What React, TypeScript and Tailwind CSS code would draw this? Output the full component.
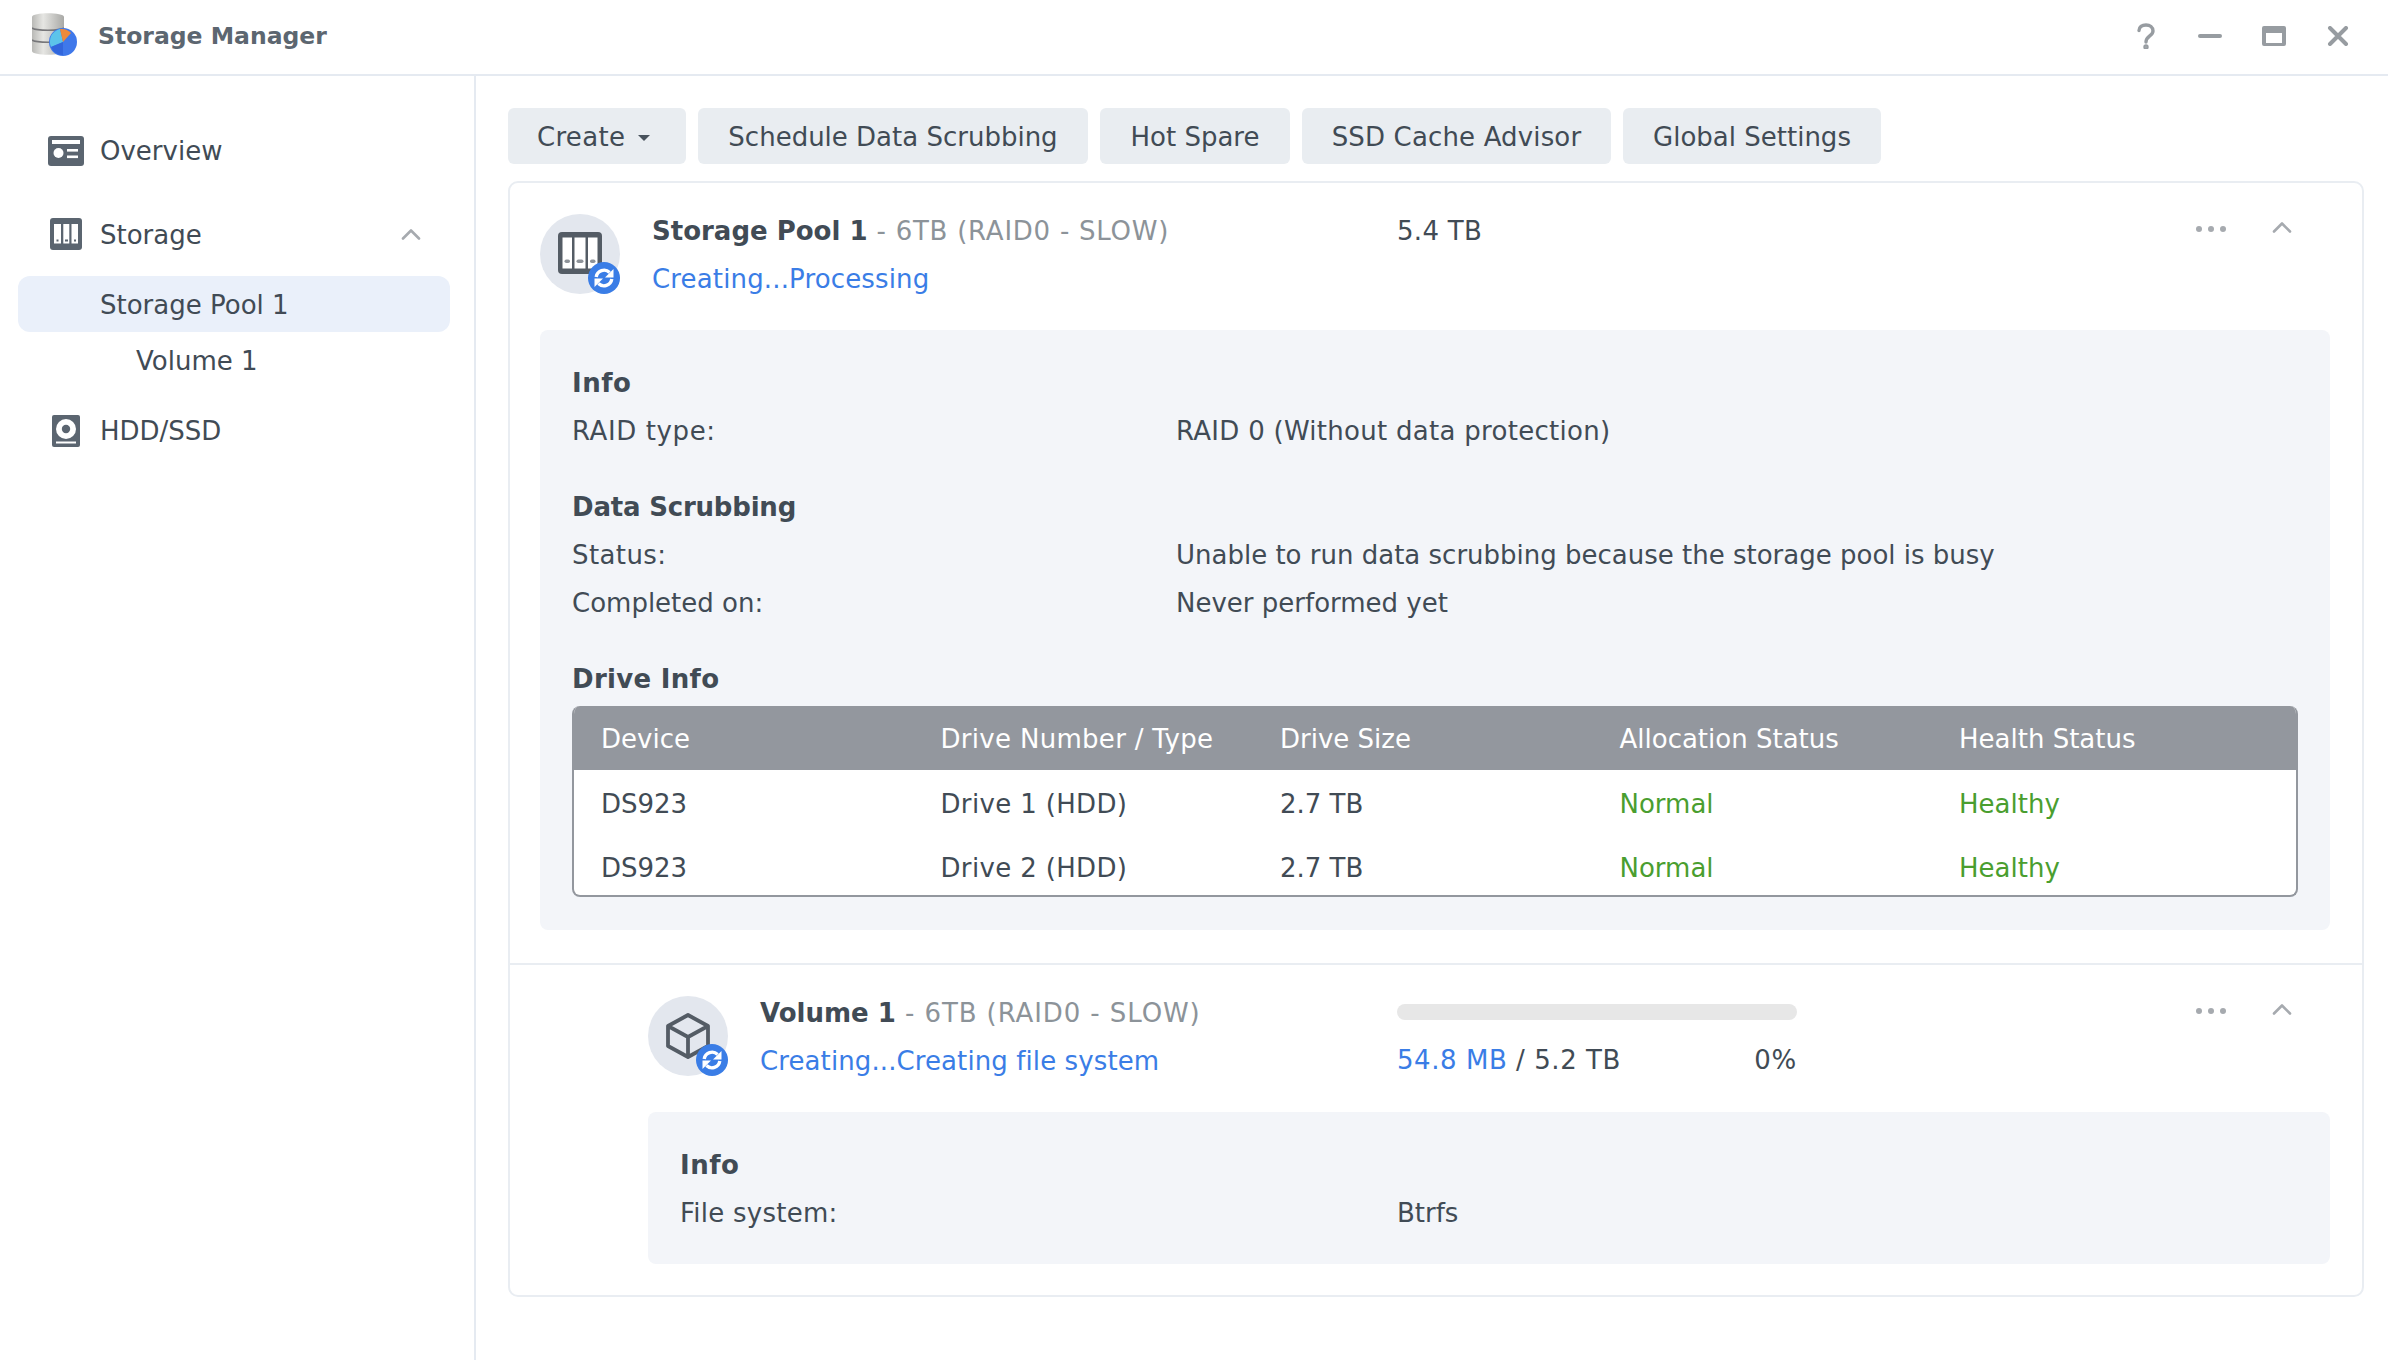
import React from 'react'

const chevron = (
  <svg width="20" height="12" viewBox="0 0 20 12" fill="none" stroke="#a6aaaf" strokeWidth="2.6" strokeLinecap="round" strokeLinejoin="round">
    <path d="M2 10.5 10 2.5l8 8" />
  </svg>
)

function Dots() {
  return (
    <div className="flex w-[30px] justify-between">
      <span className="h-[6px] w-[6px] rounded-full bg-[#a6aaaf]" />
      <span className="h-[6px] w-[6px] rounded-full bg-[#a6aaaf]" />
      <span className="h-[6px] w-[6px] rounded-full bg-[#a6aaaf]" />
    </div>
  )
}

function Logo() {
  return (
    <svg width="46" height="46" viewBox="0 0 46 46">
      <defs>
        <linearGradient id="can" x1="0" x2="1" y1="0" y2="0">
          <stop offset="0" stopColor="#b9b9b6" />
          <stop offset="0.35" stopColor="#e6e6e3" />
          <stop offset="1" stopColor="#a9a9a6" />
        </linearGradient>
      </defs>
      <path d="M0 4c0-5 32-5 32 0v34c0 5-32 5-32 0z" fill="url(#can)" />
      <path d="M0 15c4 3 28 3 32 0M0 27c4 3 28 3 32 0" stroke="#77777a" strokeWidth="1.6" fill="none" />
      <circle cx="31" cy="29" r="14" fill="#3f78ea" />
      <path d="M31 29 19 34a13 13 0 0 1 9-18z" fill="#5cc4ea" />
      <path d="M31 29 28 16a13 13 0 0 1 11 4z" fill="#ee8a3c" />
      <path d="M31 29 19 34a13 13 0 0 0 12 8z" fill="#3266dc" />
    </svg>
  )
}

function WindowControls() {
  return (
    <div className="flex items-center pr-[18px]">
      <div className="flex h-[64px] w-[64px] items-center justify-center">
        <svg width="18" height="26" viewBox="0 0 18 26" fill="none" stroke="#979ca1" strokeWidth="3.4" strokeLinecap="round">
          <path d="M2 7.5C2 4 5 2 9 2s7 2 7 6c0 5-7 5-7 11" />
          <circle cx="9" cy="24" r="1" fill="#979ca1" />
        </svg>
      </div>
      <div className="flex h-[64px] w-[64px] items-center justify-center">
        <div className="h-[4px] w-[24px] rounded-full bg-[#979ca1]" />
      </div>
      <div className="flex h-[64px] w-[64px] items-center justify-center">
        <svg width="24" height="20" viewBox="0 0 24 20">
          <path d="M2 0h20a2 2 0 0 1 2 2v16a2 2 0 0 1-2 2H2a2 2 0 0 1-2-2V2a2 2 0 0 1 2-2zm2 7v10h16V7z" fill="#979ca1" fillRule="evenodd" />
        </svg>
      </div>
      <div className="flex h-[64px] w-[64px] items-center justify-center">
        <svg width="22" height="20" viewBox="0 0 22 20" fill="none" stroke="#979ca1" strokeWidth="4" strokeLinecap="round">
          <path d="M3 2l16 16M19 2 3 18" />
        </svg>
      </div>
    </div>
  )
}

function SyncBadge() {
  return (
    <svg className="absolute bottom-0 right-0" width="32" height="32" viewBox="0 0 32 32">
      <circle cx="16" cy="16" r="16" fill="#3a7de6" />
      <path d="M8.2 15a8 8 0 0 1 13.4-4.6" fill="none" stroke="#fff" strokeWidth="3.4" />
      <path d="M25.5 7v8.5H17z" fill="#fff" />
      <path d="M23.8 17a8 8 0 0 1-13.4 4.6" fill="none" stroke="#fff" strokeWidth="3.4" />
      <path d="M6.5 25v-8.500H15z" fill="#fff" />
    </svg>
  )
}

function PoolIcon() {
  return (
    <svg width="44" height="42" viewBox="0 0 44 42">
      <rect width="44" height="42" rx="4" fill="#545c65" />
      <rect x="4.5" y="5.5" width="9.500" height="31" fill="#fff" />
      <rect x="16.5" y="5.5" width="11" height="31" fill="#fff" />
      <rect x="30" y="5.5" width="9.500" height="31" fill="#fff" />
      <rect x="6.500" y="27.5" width="5.500" height="3.600" rx="1.800" fill="#8e9399" />
      <rect x="18.500" y="27.5" width="7" height="3.600" rx="1.800" fill="#8e9399" />
      <rect x="32" y="27.5" width="5.500" height="3.600" rx="1.800" fill="#8e9399" />
    </svg>
  )
}

function StorageIcon() {
  return (
    <svg width="32" height="32" viewBox="0 0 32 32">
      <rect width="32" height="32" rx="3" fill="#5b6570" />
      <rect x="4" y="6" width="7" height="19.500" fill="#fff" />
      <rect x="13.300" y="6" width="6" height="19.500" fill="#fff" />
      <rect x="21.500" y="6" width="6.500" height="19.500" fill="#fff" />
      <rect x="6.500" y="21.500" width="2" height="2" fill="#5b6570" />
      <rect x="15" y="21.500" width="3" height="2" fill="#5b6570" />
      <rect x="24" y="21.500" width="2" height="2" fill="#5b6570" />
    </svg>
  )
}

function OverviewIcon() {
  return (
    <svg width="36" height="30" viewBox="0 0 36 30">
      <rect width="36" height="30" rx="3" fill="#5b6570" />
      <rect x="4" y="4" width="28" height="4" fill="#fff" />
      <circle cx="10.500" cy="17" r="5" fill="#fff" />
      <rect x="19" y="13" width="11" height="2.600" fill="#fff" />
      <rect x="19" y="19.500" width="11" height="2.600" fill="#fff" />
    </svg>
  )
}

function DiskIcon() {
  return (
    <svg width="28" height="32" viewBox="0 0 28 32">
      <rect width="28" height="32" rx="2" fill="#5b6570" />
      <circle cx="14" cy="14" r="10" fill="#fff" />
      <circle cx="14" cy="14" r="4.200" fill="#5b6570" />
      <rect x="4" y="26.500" width="20" height="2" fill="#fff" />
    </svg>
  )
}

function CubeIcon() {
  return (
    <svg width="44" height="46" viewBox="0 0 44 46" fill="none" stroke="#545c65" strokeWidth="3.8" strokeLinejoin="round">
      <path d="M22 2 42 13v20L22 44 2 33V13zM2 13l20 11 20-11M22 24v20" />
    </svg>
  )
}

function Avatar({ children }: { children: React.ReactNode }) {
  return (
    <div className="relative flex h-[80px] w-[80px] shrink-0 items-center justify-center rounded-full bg-[#e3e7ee]">
      {children}
      <SyncBadge />
    </div>
  )
}

function SideItem({ icon, label, labelClass, extra }: { icon: React.ReactNode; label: string; labelClass?: string; extra?: React.ReactNode }) {
  return (
    <div className="flex h-[56px] items-center pl-[48px]">
      <div className="flex w-[36px] justify-center">{icon}</div>
      <span className={`ml-[16px] ${labelClass ?? ''}`}>{label}</span>
      {extra}
    </div>
  )
}

function Row({ label, value, labelClass, valueClass }: { label: string; value: string; labelClass?: string; valueClass?: string }) {
  return (
    <div className="flex leading-[32px]">
      <span className={`w-[604px] shrink-0 ${labelClass ?? ''}`}>{label}</span>
      <span className={valueClass}>{value}</span>
    </div>
  )
}

const drives = [
  { device: 'DS923', type: 'Drive 1 (HDD)' },
  { device: 'DS923', type: 'Drive 2 (HDD)' },
]

const tabs = [
  { label: 'Schedule Data Scrubbing', width: 'w-[390px]' },
  { label: 'Hot Spare', width: 'w-[190px]' },
  { label: 'SSD Cache Advisor', width: 'w-[309px] tracking-[0.15px]' },
  { label: 'Global Settings', width: 'w-[258px]' },
]

export default function App() {
  return (
    <div className="flex h-[1360px] w-[2388px] flex-col overflow-hidden bg-white text-[26px] text-[#414b55] [font-family:'DejaVu_Sans',sans-serif]">
      <div className="flex h-[76px] shrink-0 items-center justify-between border-b-2 border-[#e5eaf1] pb-[2px]">
        <div className="flex items-center pl-[32px]">
          <div className="w-[66px]">
            <Logo />
          </div>
          <span className="pt-[1px] text-[23.5px] font-bold text-[#5c6670]">Storage Manager</span>
        </div>
        <WindowControls />
      </div>

      <div className="flex flex-1">
        {/* Sidebar */}
        <div className="w-[476px] shrink-0 border-r-2 border-[#e5eaf1] pt-[47px]">
          <SideItem icon={<OverviewIcon />} label="Overview" />
          <div className="mt-[27px]">
            <SideItem
              icon={<StorageIcon />}
              label="Storage"
              labelClass="pt-[2px]"
              extra={<div className="ml-auto mr-[53px]">{chevron}</div>}
            />
          </div>
          <div className="ml-[18px] mr-[24px]">
            <div className="mt-[14px] flex h-[56px] items-center rounded-[12px] bg-[#eaf0fa] pl-[82px] pt-[3px]">Storage Pool 1</div>
            <div className="flex h-[56px] items-center pl-[118px] pt-[3px]">Volume 1</div>
          </div>
          <div className="mt-[15px]">
            <SideItem icon={<DiskIcon />} label="HDD/SSD" />
          </div>
        </div>

        {/* Main */}
        <div className="flex-1 pl-[32px] pt-[32px]">
          <div className="flex gap-[12px]">
            <button className="flex h-[56px] w-[178px] items-center rounded-[6px] bg-[#e9edf1] pl-[29px] pt-[2px] tracking-[0.3px]">
              Create
              <span className="ml-[13px] mt-[2px] h-0 w-0 border-x-[6px] border-t-[6px] border-x-transparent border-t-[#48525c]" />
            </button>
            {tabs.map(t => (
              <button key={t.label} className={`h-[56px] rounded-[6px] bg-[#e9edf1] pt-[2px] ${t.width}`}>
                {t.label}
              </button>
            ))}
          </div>

          <div className="mt-[17px] w-[1856px] rounded-[10px] border-2 border-[#e9edf2]">
            {/* Storage pool */}
            <div className="pb-[33px] pl-[30px] pr-[32px] pt-[31px]">
              <div className="flex h-[80px]">
                <Avatar>
                  <div className="mb-[2px]">
                    <PoolIcon />
                  </div>
                </Avatar>
                <div className="ml-[32px] flex w-[745px] shrink-0 flex-col gap-[16px] pt-[1px] leading-[32px]">
                  <div>
                    <span className="font-bold">Storage Pool 1</span>
                    <span className="tracking-[0.75px] text-[#8c9399]"> - 6TB (RAID0 - SLOW)</span>
                  </div>
                  <div className="tracking-[0.15px] text-[#3a7de6]">Creating...Processing</div>
                </div>
                <div className="pt-[1px] leading-[32px] tracking-[0.3px]">5.4 TB</div>
                <div className="ml-auto flex h-[30px] items-center gap-[46px] pr-[38px]">
                  <Dots />
                  <div className="-mt-[4px]">{chevron}</div>
                </div>
              </div>

              <div className="mt-[36px] rounded-[8px] bg-[#f3f5f9] px-[32px] pb-[33px] pt-[36px]">
                <div className="pt-[1px] font-bold leading-[32px] tracking-[0.5px]">Info</div>
                <div className="mt-[16px]">
                  <Row label="RAID type:" labelClass="tracking-[0.6px]" value="RAID 0 (Without data protection)" valueClass="tracking-[0.28px]" />
                </div>
                <div className="mt-[44px] font-bold leading-[32px] tracking-[-0.2px]">Data Scrubbing</div>
                <div className="mt-[16px] flex flex-col gap-[16px]">
                  <Row label="Status:" labelClass="tracking-[0.4px]" value="Unable to run data scrubbing because the storage pool is busy" />
                  <Row label="Completed on:" value="Never performed yet" />
                </div>
                <div className="mt-[44px] font-bold leading-[32px] tracking-[0.3px]">Drive Info</div>

                <div className="mt-[11px] h-[191px] overflow-hidden rounded-[8px] border-x-2 border-b-2 border-[#93979e] bg-white">
                  <div className="grid h-[64px] grid-cols-[repeat(5,339.5px)] items-center bg-[#93979e] pl-[27px] pt-[2px] text-white">
                    <span>Device</span>
                    <span className="tracking-[0.3px]">Drive Number / Type</span>
                    <span>Drive Size</span>
                    <span>Allocation Status</span>
                    <span>Health Status</span>
                  </div>
                  {drives.map(d => (
                    <div key={d.type} className="grid h-[64px] grid-cols-[repeat(5,339.5px)] items-center pl-[27px] pt-[4px]">
                      <span>{d.device}</span>
                      <span className="tracking-[0.35px]">{d.type}</span>
                      <span>2.7 TB</span>
                      <span className="text-[#4a9e2f]">Normal</span>
                      <span className="text-[#4a9e2f]">Healthy</span>
                    </div>
                  ))}
                </div>
              </div>
            </div>

            {/* Volume */}
            <div className="border-t-2 border-[#e9edf2] pb-[31px] pl-[138px] pr-[32px] pt-[31px]">
              <div className="flex h-[80px]">
                <Avatar>
                  <CubeIcon />
                </Avatar>
                <div className="ml-[32px] flex w-[637px] shrink-0 flex-col gap-[16px] pt-[1px] leading-[32px]">
                  <div>
                    <span className="font-bold">Volume 1</span>
                    <span className="tracking-[0.9px] text-[#8c9399]"> - 6TB (RAID0 - SLOW)</span>
                  </div>
                  <div className="tracking-[0.1px] text-[#3a7de6]">Creating...Creating file system</div>
                </div>
                <div className="flex w-[400px] shrink-0 flex-col gap-[16px] leading-[32px]">
                  <div className="flex h-[32px] items-center">
                    <div className="h-[16px] w-full rounded-full bg-[#e7e7e7]" />
                  </div>
                  <div className="flex justify-between pt-[1px]">
                    <span className="tracking-[0.55px]">
                      <span className="text-[#3a7de6]">54.8 MB</span> / 5.2 TB
                    </span>
                    <span className="tracking-[0.8px]">0%</span>
                  </div>
                </div>
                <div className="ml-auto flex h-[30px] items-center gap-[46px] pr-[38px]">
                  <Dots />
                  <div className="-mt-[4px]">{chevron}</div>
                </div>
              </div>

              <div className="mt-[36px] h-[152px] rounded-[8px] bg-[#f3f5f9] px-[32px] pt-[36px]">
                <div className="pt-[1px] font-bold leading-[32px] tracking-[0.5px]">Info</div>
                <div className="mt-[16px] flex leading-[32px]">
                  <span className="w-[717px] shrink-0 tracking-[0.25px]">File system:</span>
                  <span>Btrfs</span>
                </div>
              </div>
            </div>
          </div>
        </div>
      </div>
    </div>
  )
}
